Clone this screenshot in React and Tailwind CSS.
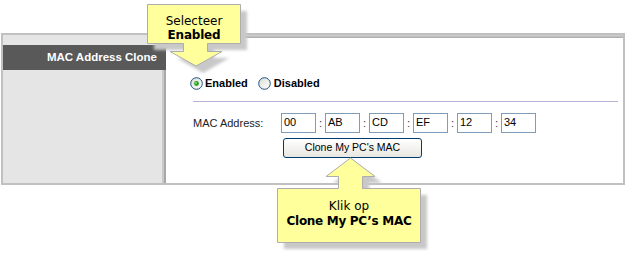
const Radio = ({ checked }) => (
  <svg width="13" height="13" viewBox="0 0 13 13" className="shrink-0">
    <defs>
      <linearGradient id={checked ? "rg1" : "rg2"} x1="0" y1="0" x2="1" y2="1">
        <stop offset="0" stopColor="#dcdcd5" />
        <stop offset="1" stopColor="#ffffff" />
      </linearGradient>
    </defs>
    <circle cx="6.5" cy="6.5" r="5.8" fill={`url(#${checked ? "rg1" : "rg2"})`} stroke="#1c5180" strokeWidth="1" />
    {checked && <circle cx="6.5" cy="6.5" r="2.4" fill="#21a121" />}
    {checked && <circle cx="6" cy="6" r="0.9" fill="#8ee08e" />}
  </svg>
);

const MacField = ({ value }) => (
  <div className="w-[35px] h-[20px] border border-[#7f9db9] bg-white pl-[2px] text-[11px] leading-[17px] text-black">
    {value}
  </div>
);

const Callouts = () => (
  <svg className="absolute inset-0 pointer-events-none" width="628" height="253">
    <defs>
      <filter id="blur" x="-20%" y="-20%" width="140%" height="140%">
        <feGaussianBlur stdDeviation="1.5" />
      </filter>
    </defs>
    <g fill="#c8c8c8" filter="url(#blur)" transform="translate(7 7)">
      <path d="M147 4 H240 V43 H207 V51 H222 L196 66 L170 51 H183 V43 H147 Z" />
      <path d="M277 188 H338 V176 H326 L350.5 158 L375 176 H362 V188 H420 V242 H277 Z" />
    </g>
    <g fill="#ffff9c" stroke="#adadad" strokeWidth="1">
      <path d="M147.5 4.5 H240.5 V43.5 H207.5 V51.5 H222 L196 66 L170 51.5 H183.5 V43.5 H147.5 Z" />
      <path d="M277.5 188.5 H338.5 V176.5 H326 L350.5 158 L375 176.5 H362.5 V188.5 H420.5 V242.5 H277.5 Z" />
    </g>
  </svg>
);

export default function App() {
  return (
    <div className="relative w-[628px] h-[253px] bg-white overflow-hidden font-['Liberation_Sans',Arial,sans-serif]">
      <div className="pt-[33px] pl-px">
        <div className="flex w-[624px] h-[152px] border-2 border-[#c0c0c0]">
          <div className="w-[163px] bg-[#e5e5e5] pt-[10px] shadow-[inset_-2px_0_0_#a8a8a8,inset_-4px_0_0_#c9c9c9]">
            <div className="h-[25px] bg-[#595959] flex items-center justify-end pr-[9px] text-white font-bold text-[11.5px]">
              MAC Address Clone
            </div>
          </div>
          <div className="flex-1 flex flex-col">
            <div className="h-[3px] bg-gradient-to-b from-[#d4d4d4] to-[#a9a9a9]" />
            <div className="pl-[24px] pr-[5px]">
              <div className="mt-[38px] h-[14px] flex items-center text-[11px] font-bold text-black">
                <Radio checked />
                <span className="ml-[2px]">Enabled</span>
                <span className="ml-[10px]"><Radio /></span>
                <span className="ml-[3px]">Disabled</span>
              </div>
              <div className="mt-[11px] ml-[3px] h-px bg-[#b7b2d9]" />
              <div className="mt-[11px] ml-[3px] flex items-center">
                <div className="w-[88px] text-[11px] text-[#222]">MAC Address:</div>
                <MacField value="00" />
                <span className="w-[9px] text-center text-[11px] text-[#333]">:</span>
                <MacField value="AB" />
                <span className="w-[9px] text-center text-[11px] text-[#333]">:</span>
                <MacField value="CD" />
                <span className="w-[9px] text-center text-[11px] text-[#333]">:</span>
                <MacField value="EF" />
                <span className="w-[9px] text-center text-[11px] text-[#333]">:</span>
                <MacField value="12" />
                <span className="w-[9px] text-center text-[11px] text-[#333]">:</span>
                <MacField value="34" />
              </div>
              <div className="mt-[5px] ml-[93px] w-[139px] h-[20px] rounded-[3px] border border-[#003c74] bg-gradient-to-b from-white to-[#e8e7e0] flex items-center justify-center text-[10.5px] text-black">
                Clone My PC's MAC
              </div>
            </div>
          </div>
        </div>
      </div>

      <Callouts />

      <div className="absolute left-[147px] top-[14px] w-[94px] text-center font-['DejaVu_Sans',Verdana,sans-serif] text-[12px] leading-[14px] text-black">
        <div>Selecteer</div>
        <div className="font-bold tracking-[-0.2px]">Enabled</div>
      </div>
      <div className="absolute left-[277px] top-[199px] w-[144px] text-center font-['DejaVu_Sans',Verdana,sans-serif] text-[12px] leading-[15px] text-black">
        <div>Klik op</div>
        <div className="font-bold tracking-[-0.3px]">Clone My PC’s MAC</div>
      </div>
    </div>
  );
}
